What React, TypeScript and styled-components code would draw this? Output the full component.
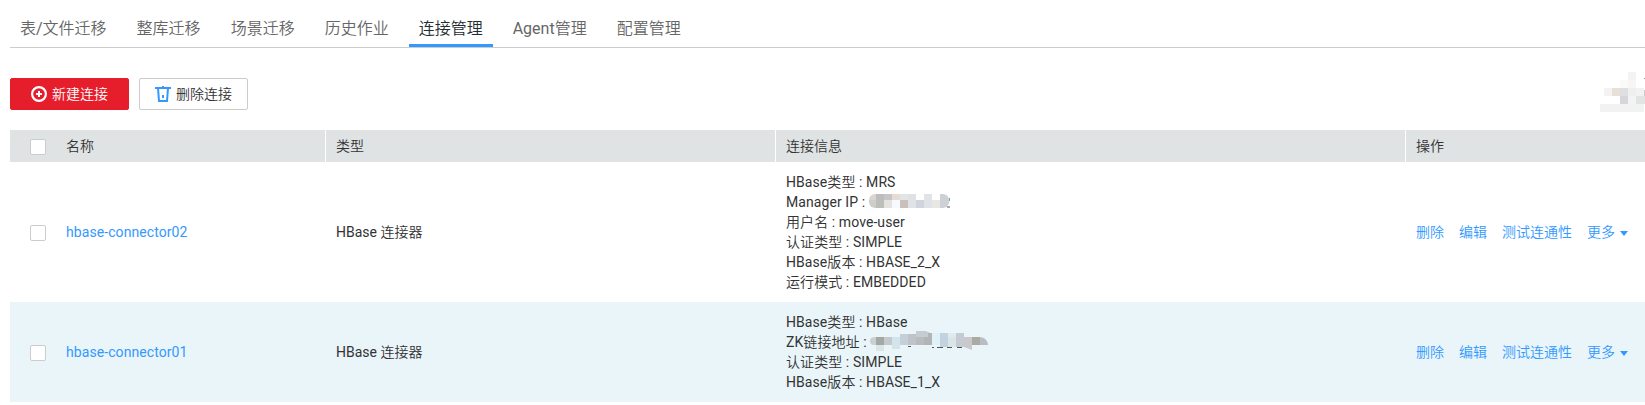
import React from "react";
import styled, { createGlobalStyle } from "styled-components";

const GlobalStyle = createGlobalStyle`
  * { box-sizing: border-box; }
  body {
    margin: 0;
    overflow: hidden;
    background: #fff;
    color: #333;
    font: 14px/20px Roboto, "Noto Sans CJK SC DemiLight", "Noto Sans CJK SC", sans-serif;
  }
`;

const Page = styled.main`
  height: 405px;
  padding-left: 10px;
  overflow: hidden;
`;

const Tabs = styled.nav`
  display: flex;
  gap: 10px;
  height: 48px;
  padding-top: 8px;
  border-bottom: 1px solid #ccc;
`;

const Tab = styled.a<{ $active?: boolean }>`
  height: 39px;
  padding: 0 10px;
  border-bottom: 3px solid ${(p) => (p.$active ? "#3399ff" : "transparent")};
  color: ${(p) => (p.$active ? "#252b2f" : "#666")};
  font-size: 16px;
  line-height: 42px;
  white-space: nowrap;
`;

const Toolbar = styled.div`
  display: flex;
  gap: 10px;
  height: 82px;
  padding-top: 30px;
`;

const Button = styled.button<{ $primary?: boolean }>`
  display: flex;
  align-items: center;
  gap: 5px;
  width: ${(p) => (p.$primary ? 119 : 109)}px;
  height: 32px;
  padding: 0 0 0 ${(p) => (p.$primary ? 20 : 15)}px;
  border: 1px solid ${(p) => (p.$primary ? "#e61e2b" : "#ccc")};
  border-radius: 2px;
  background: ${(p) => (p.$primary ? "#e61e2b" : "#fff")};
  color: ${(p) => (p.$primary ? "#fff" : "#333")};
  font: inherit;
  white-space: nowrap;
`;

const CornerMosaic = styled.div`
  display: flex;
  margin: -6px 0 0 auto;
`;

const Table = styled.div`
  display: flex;
  flex-direction: column;
`;

const Row = styled.div<{ $tone?: "head" | "tint" }>`
  display: grid;
  grid-template-columns: 316px 450px 630px 1fr;
  align-items: stretch;
  background: ${(p) => (p.$tone === "head" ? "#dfe3e4" : p.$tone === "tint" ? "#e9f5f9" : "#fff")};
`;

const HeadCell = styled.div`
  display: flex;
  align-items: center;
  height: 32px;
  padding-left: 10px;
  border-right: 1px solid #fff;
  &:first-child { padding-left: 20px; }
  &:last-child { border-right: 0; }
`;

const Cell = styled.div`
  display: flex;
  align-items: center;
  padding: 10px 0 10px 10px;
  &:first-child { padding-left: 20px; }
`;

const Checkbox = styled.span`
  width: 16px;
  height: 16px;
  margin: 2px 20px 0 0;
  border: 1px solid #ccc;
  border-radius: 2px;
  background: #fff;
`;

const Link = styled.a`
  color: #3399ff;
  white-space: nowrap;
`;

const NameLink = styled(Link)`
  letter-spacing: 0.08px;
`;

const Info = styled.div`
  display: flex;
  flex-direction: column;
  letter-spacing: 0.08px;
`;

const InfoLine = styled.div`
  display: flex;
  height: 20px;
  white-space: pre;
`;

const Actions = styled(Cell)`
  gap: 15px;
`;

const More = styled(Link)`
  display: flex;
  align-items: center;
  gap: 5px;
`;

const Drawing = styled.svg`
  display: block;
  flex: none;
  overflow: visible;
`;

const Caret = styled(Drawing)`
  margin-top: 3px;
`;

const MaskSlot = styled.span<{ $shift: number; $left: number }>`
  display: block;
  margin: ${(p) => p.$shift}px 0 0 ${(p) => p.$left}px;
`;

type Block = [x: number, y: number, w: number, h: number, fill: string];

const Blocks = ({ items }: { items: Block[] }) => (
  <>
    {items.map(([x, y, w, h, fill], i) => (
      <rect key={i} x={x} y={y} width={w} height={h} fill={fill} />
    ))}
  </>
);

const cornerBlocks: Block[] = [
  [28, 0, 8, 8, "#f3f3f3"], [20, 8, 8, 8, "#fafafa"], [28, 8, 8, 8, "#f7f6f4"],
  [4, 16, 8, 8, "#f3f3f3"], [12, 16, 8, 8, "#e6e0d9"], [20, 16, 8, 8, "#dedfe0"],
  [28, 16, 8, 8, "#efeff0"], [36, 16, 8, 8, "#f2f2f2"], [44, 18, 1, 6, "#cccccc"],
  [20, 24, 8, 8, "#d4d6da"], [28, 24, 8, 8, "#f3f3f4"], [36, 24, 9, 8, "#e1e4e3"],
  [0, 32, 44, 8, "#f2f2f2"], [44, 6, 1, 1, "#999"],
];

const ipBlocks: Block[] = [
  [0, 0, 7, 6, "#dcd4ce"], [7, 0, 8, 6, "#bdbdbf"], [15, 0, 8, 6, "#c6c6c6"],
  [23, 0, 8, 6, "#e7dcd2"], [31, 0, 8, 6, "#e1e5e8"], [39, 0, 8, 6, "#dde2e5"],
  [55, 0, 8, 6, "#e0e4e8"], [71, 0, 10, 6, "#cdd1d4"],
  [0, 6, 7, 8, "#cdcecb"], [7, 6, 8, 8, "#bdbdba"], [15, 6, 8, 8, "#e4e3e1"],
  [23, 6, 8, 8, "#f6faff"], [31, 6, 8, 8, "#c8c0bb"], [39, 6, 8, 8, "#dfe3e6"],
  [47, 6, 8, 8, "#cfd4de"], [55, 6, 8, 8, "#dfe3e7"], [63, 6, 8, 8, "#e8e7e3"],
  [71, 6, 10, 8, "#ced1d5"],
];

const zkBlocks: Block[] = [
  [0, 6, 6, 8, "#cbcfcd"], [6, 6, 8, 8, "#a3a8a6"], [14, 6, 8, 8, "#c4c9cb"],
  [22, 6, 8, 8, "#d2e4ed"], [30, 3, 8, 11, "#c6cfd8"], [38, 3, 8, 11, "#bfc4cc"],
  [46, 0, 8, 14, "#b9bbbf"], [54, 0, 8, 14, "#b2b5b7"], [46, 0, 12, 6, "#c5cdd0"],
  [62, 2, 8, 12, "#dff2fa"], [70, 2, 8, 14, "#c3d2df"], [78, 6, 8, 10, "#dae5e7"],
  [78, 2, 8, 4, "#e0e9ec"], [86, 2, 8, 14, "#c4ccd2"],
  [94, 6, 8, 13, "#cbc8cd"], [102, 6, 8, 8, "#a9aaa1"], [110, 6, 8, 8, "#bbbcc3"],
  [6, 14, 8, 6, "#dce4e4"], [22, 14, 8, 4, "#d5e4eb"],
];

const IpMask = () => (
  <MaskSlot $shift={2} $left={4}>
    <Drawing width="82" height="14">
      <defs><clipPath id="ip"><rect width="80" height="14" rx="6" /></clipPath></defs>
      <g clipPath="url(#ip)"><Blocks items={ipBlocks} /></g>
      <path d="M78 13h3" stroke="#555" strokeWidth="1" />
      <path d="M80.5 4v3" stroke="#78a0b4" strokeWidth="1" />
    </Drawing>
  </MaskSlot>
);

const ZkMask = () => (
  <MaskSlot $shift={-1} $left={3.5}>
    <Drawing width="118" height="19">
      <defs>
        <clipPath id="zk"><path d="M5 6H30V3H38V2H46V0H55L60 2H94V6H109Q117 6 118 14H102V19L94 16H62V14H30V18H22V14H14V20H6V14H4Q0 14 0 10Q0 6 5 6Z" /></clipPath>
      </defs>
      <g clipPath="url(#zk)"><Blocks items={zkBlocks} /></g>
      <path d="M38 15.5h3M62 16.5h2M67 16.5h6M77 16.5h5M87 16.5h5" stroke="#555" strokeWidth="1" />
    </Drawing>
  </MaskSlot>
);

const PlusIcon = () => (
  <Drawing width="16" height="16" fill="none" stroke="#fff" strokeWidth="2.2">
    <circle cx="8" cy="8" r="6.9" />
    <path d="M8 5v6M5 8h6" strokeWidth="2" />
  </Drawing>
);

const TrashIcon = () => (
  <Drawing width="16" height="16" fill="none" stroke="#3399ff" strokeWidth="2">
    <path d="M0 2h16M8 0v2M3 2l1 13h8l1-13" />
    <path d="M8 9v3" />
  </Drawing>
);

const rows = [
  {
    name: "hbase-connector02",
    info: ["HBase类型 : MRS", "Manager IP :", "用户名 : move-user", "认证类型 : SIMPLE", "HBase版本 : HBASE_2_X", "运行模式 : EMBEDDED"],
    mask: <IpMask />,
  },
  {
    name: "hbase-connector01",
    info: ["HBase类型 : HBase", "ZK链接地址 :", "认证类型 : SIMPLE", "HBase版本 : HBASE_1_X"],
    mask: <ZkMask />,
  },
];

const tabs = ["表/文件迁移", "整库迁移", "场景迁移", "历史作业", "连接管理", "Agent管理", "配置管理"];

export default function App() {
  return (
    <Page>
      <GlobalStyle />
      <Tabs>
        {tabs.map((t) => <Tab key={t} $active={t === "连接管理"}>{t}</Tab>)}
      </Tabs>
      <Toolbar>
        <Button $primary><PlusIcon />新建连接</Button>
        <Button><TrashIcon />删除连接</Button>
        <CornerMosaic>
          <Drawing width="45" height="40"><Blocks items={cornerBlocks} /></Drawing>
        </CornerMosaic>
      </Toolbar>
      <Table>
        <Row $tone="head">
          <HeadCell><Checkbox />名称</HeadCell>
          <HeadCell>类型</HeadCell>
          <HeadCell>连接信息</HeadCell>
          <HeadCell>操作</HeadCell>
        </Row>
        {rows.map((row, i) => (
          <Row key={row.name} $tone={i % 2 ? "tint" : undefined}>
            <Cell><Checkbox /><NameLink>{row.name}</NameLink></Cell>
            <Cell>HBase 连接器</Cell>
            <Cell>
              <Info>
                {row.info.map((line) => (
                  <InfoLine key={line}>{line}{line.endsWith(":") && row.mask}</InfoLine>
                ))}
              </Info>
            </Cell>
            <Actions>
              <Link>删除</Link>
              <Link>编辑</Link>
              <Link>测试连通性</Link>
              <More>更多<Caret width="8" height="5"><path d="M0 0h8L4 5z" fill="#3399ff" /></Caret></More>
            </Actions>
          </Row>
        ))}
      </Table>
    </Page>
  );
}
